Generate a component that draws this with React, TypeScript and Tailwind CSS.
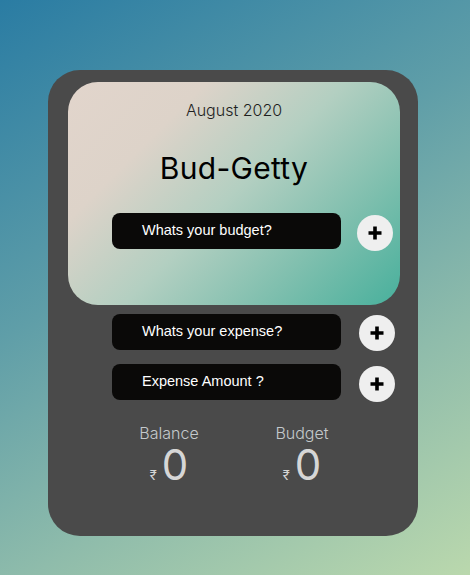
import React from "react";

function PlusButton({ className = "" }: { className?: string }) {
  return (
    <button
      className={`w-9 h-9 rounded-full bg-[#efefef] flex items-center justify-center shrink-0 ${className}`}
    >
      <svg width="16" height="16" viewBox="0 0 16 16">
        <path d="M8 1.5v13M1.5 8h13" stroke="#000" strokeWidth="3.6" />
      </svg>
    </button>
  );
}

function Field({ label }: { label: string }) {
  return (
    <div className="w-[229px] h-9 rounded-lg bg-[#0a0908] flex items-center pl-[30px] text-white text-[14.5px] font-['Liberation_Sans',Arial,sans-serif]">
      {label}
    </div>
  );
}

function Stat({ label }: { label: string }) {
  return (
    <div className="w-[120px] flex flex-col items-center">
      <div className="text-[16px] leading-6 font-light text-[#c4c9cc]">{label}</div>
      <div className="flex items-baseline gap-[5px] text-[#d6d6d6] -mt-[2px]">
        <span className="text-[13px]">₹</span>
        <span className="text-[42px] leading-[44px]">0</span>
      </div>
    </div>
  );
}

export default function App() {
  return (
    <div className="w-[470px] h-[575px] bg-[linear-gradient(150deg,#2a7ca3_0%,#5f9ea8_40%,#8fbcab_70%,#bad8ad_100%)] pt-[70px] pl-[48px] font-['Inter','Open_Sans',sans-serif]">
      <div className="w-[370px] h-[466px] rounded-[32px] bg-[#4a4a4a] pt-3">
        <div className="ml-5 w-[332px] h-[223px] rounded-[30px] bg-[linear-gradient(135deg,#e2d5cc_0%,#ddd3c9_25%,#b3cfc1_50%,#7fbfae_75%,#48b09c_100%)] pt-4 flex flex-col">
          <div className="text-center text-[16px] leading-6 font-light text-[#1f1f1f]">
            August 2020
          </div>
          <div className="text-center text-[30px] leading-9 text-black mt-7 tracking-[0.3px]">
            Bud-Getty
          </div>
          <div className="flex items-start mt-[27px] ml-[44px] gap-4">
            <Field label="Whats your budget?" />
            <PlusButton className="mt-[2px]" />
          </div>
        </div>
        <div className="ml-16 mt-[9px] flex items-start gap-[18px]">
          <Field label="Whats your expense?" />
          <PlusButton className="mt-[1px]" />
        </div>
        <div className="ml-16 mt-[13px] flex items-start gap-[18px]">
          <Field label="Expense Amount ?" />
          <PlusButton className="mt-[2px]" />
        </div>
        <div className="ml-[61px] mt-[19px] flex gap-[13px]">
          <Stat label="Balance" />
          <Stat label="Budget" />
        </div>
      </div>
    </div>
  );
}
